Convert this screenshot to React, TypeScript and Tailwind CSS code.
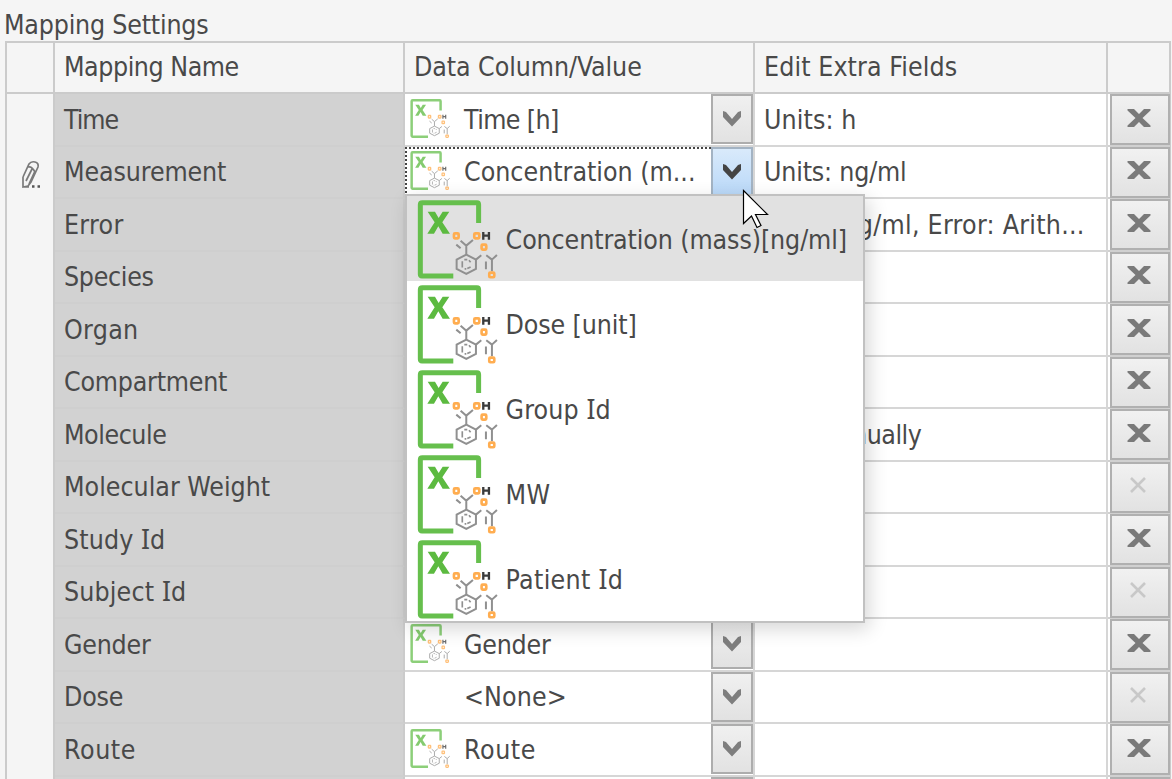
import { ReactNode } from "react";

type Row = {
  name: string;
  nameTracking?: string;
  value?: string;
  valueTracking?: string;
  icon?: boolean;
  extra?: string;
  extraTracking?: string;
  disabled?: boolean;
  active?: boolean;
};

const rows: Row[] = [
  { name: "Time", nameTracking: "tracking-[-1px]", value: "Time [h]", valueTracking: "tracking-[-0.6px]", icon: true, extra: "Units: h", extraTracking: "tracking-[0.1px]" },
  { name: "Measurement", nameTracking: "tracking-[-0.120px]", value: "Concentration (m...", valueTracking: "tracking-[0px]", icon: true, extra: "Units: ng/ml", extraTracking: "tracking-[-0.180px]", active: true },
  { name: "Error", nameTracking: "tracking-[0.3px]", extra: "Units: ng/ml, Error: Arith...", extraTracking: "tracking-[0.270px]" },
  { name: "Species", nameTracking: "tracking-[-0.3px]" },
  { name: "Organ", nameTracking: "tracking-[0.3px]" },
  { name: "Compartment", nameTracking: "tracking-[-0.230px]" },
  { name: "Molecule", nameTracking: "tracking-[-0.450px]", extra: "Edit manually", extraTracking: "tracking-[-0.5px]" },
  { name: "Molecular Weight", nameTracking: "tracking-[0px]", disabled: true },
  { name: "Study Id", nameTracking: "tracking-[0.1px]" },
  { name: "Subject Id", nameTracking: "tracking-[0.150px]", disabled: true },
  { name: "Gender", nameTracking: "tracking-[-0.230px]", value: "Gender", valueTracking: "tracking-[-0.230px]", icon: true },
  { name: "Dose", nameTracking: "tracking-[-0.2px]", value: "<None>", valueTracking: "tracking-[0.1px]", disabled: true },
  { name: "Route", nameTracking: "tracking-[0.6px]", value: "Route", valueTracking: "tracking-[0.6px]", icon: true },
  { name: "" },
];

const options = [
  { label: "Concentration (mass)[ng/ml]", tracking: "tracking-[-0.110px]" },
  { label: "Dose [unit]", tracking: "tracking-[-0.120px]" },
  { label: "Group Id", tracking: "tracking-[0.120px]" },
  { label: "MW", tracking: "tracking-[0.3px]" },
  { label: "Patient Id", tracking: "tracking-[0.3px]" },
];

function Label({ text, tracking = "" }: { text: string; tracking?: string }) {
  const parts = text.split("I");
  return (
    <span className={"whitespace-pre " + tracking}>
      {parts.map((part, i) => (
        <span key={i}>
          {i > 0 && <span className="font-['Noto_Sans',sans-serif] leading-none">I</span>}
          {part}
        </span>
      ))}
    </span>
  );
}

function DataIcon({ className }: { className: string }) {
  return (
    <svg viewBox="50 15 248 248" className={className} fill="none">
      <path d="M159 243H65Q60 243 60 238V29Q60 23 66 23H230Q235 23 235 29V84" stroke="#66bf4d" strokeWidth="15" />
      <path d="M82 50H104L115 69L127 50H147L126 82L149 116H127L114 94L101 116H81L103 82Z" fill="#5cba40" />
      <g stroke="#909090" strokeWidth="6">
        <path d="M198 179L227 194V222L198 237L169 222V194Z" />
        <path d="M198 179V152L181 137M198 152L218 135M168 149L181 160M227 194L243 181M275 229V194L258 181M275 194L290 180M257 200V223" />
        <path d="M186 199V218M192 194H201M206 196L211 202M211 216L201 221M193 222H198" strokeWidth="5" />
      </g>
      <g stroke="#ffad50" strokeWidth="8">
        <rect x="161" y="115" width="14" height="15" rx="3" />
        <rect x="222" y="115" width="15" height="15" rx="3" />
        <rect x="244" y="149" width="14" height="15" rx="3" />
        <rect x="267" y="233" width="15" height="14" rx="3" />
      </g>
      <path d="M249 111V134M266 111V134M249 122H266" stroke="#3c3c3c" strokeWidth="7" />
    </svg>
  );
}

function ArrowButton({ active }: { active?: boolean }) {
  return (
    <div
      className={
        "flex h-[50px] w-[42px] shrink-0 items-center justify-center border-2 bg-linear-to-b " +
        (active
          ? "border-[#a3b3c3] from-[#d9eafb] to-[#b9d8f8] text-[#444444]"
          : "border-[#adadad] from-[#f0f0f0] to-[#e2e2e2] text-[#7e7e7e]")
      }
    >
      <svg viewBox="0 0 18 16" className="mr-px h-4 w-[18px]" fill="currentColor">
        <path d="M0 0L3 1L9 8L15 1L18 0V6L9 15.5L0 6Z" />
      </svg>
    </div>
  );
}

function DeleteButton({ disabled }: { disabled?: boolean }) {
  return (
    <div className="flex h-[51px] w-[60px] items-center justify-center border-2 border-[#b0b0b0] bg-linear-to-b from-[#f1f1f1] to-[#e2e2e2]">
      {disabled ? (
        <svg viewBox="0 0 16 16" className="mr-1 mt-[-5px] h-4 w-4" fill="none" stroke="#c8c8c8" strokeWidth="2.6">
          <path d="M1 1L15 15M15 1L1 15" />
        </svg>
      ) : (
        <svg viewBox="0 0 24 18" className="mr-[3px] mt-[-4px] h-[18px] w-6" fill="#7a7a7a">
          <path d="M0.500 0H7L12 5L17 0H23.500V1.500L15.500 9L23.500 16.500V18H17L12 13L7 18H0.500V16.500L8.500 9L0.500 1.500Z" />
        </svg>
      )}
    </div>
  );
}

function HeaderCell({ className, children }: { className: string; children?: ReactNode }) {
  return <div className={"flex shrink-0 items-center border-r-2 border-[#cbcbcb] pb-[2px] pl-[9px] " + className}>{children}</div>;
}

function PencilIcon() {
  return (
    <svg viewBox="0 0 20 29" className="ml-[14px] mt-[3px] h-[29px] w-5" fill="none" stroke="#7a7a7a" strokeWidth="1.7">
      <path d="M2 17L8 4Q10 1 14 2Q18 3 17 7L10 22L7 26L2 27V17M7 7Q11 6 14 12M11 9L5 21M14 11L8 24M2 27H8" />
      <path d="M11 26.500H13.500M16.500 26.500H19" stroke="#555555" strokeWidth="2.4" />
    </svg>
  );
}

function OptionList() {
  return (
    <div className="absolute left-[405px] top-[194px] w-[460px] border-2 border-[#c1c1c1] bg-white shadow-[4px_6px_18px_rgba(0,0,0,0.16)]">
      {options.map((option, i) => (
        <div key={option.label} className={"flex h-[85px] items-center pl-[10px] " + (i === 0 ? "bg-[#e1e1e1]" : "bg-white")}>
          <DataIcon className="mt-[5px] h-[82.600px] w-[82.600px] shrink-0" />
          <span className="ml-[6px] mt-[2px]">
            <Label text={option.label} tracking={option.tracking} />
          </span>
        </div>
      ))}
    </div>
  );
}

export default function App() {
  return (
    <div className="relative h-[779px] w-[1172px] overflow-hidden bg-[#f5f5f5] font-['DejaVu_Sans_Condensed','DejaVu_Sans',sans-serif] text-[26.500px] leading-8 text-[#494949] [font-stretch:condensed]">
      <div className="h-[41px] pl-1 pt-[9px]">
        <Label text="Mapping Settings" tracking="tracking-[-0.2px]" />
      </div>
      <div className="ml-[5px] w-[1166px] border-2 border-b-0 border-[#cbcbcb]">
        <div className="flex h-[51px] border-b-2 border-[#cbcbcb]">
          <HeaderCell className="w-[48px]" />
          <HeaderCell className="w-[350px]">
            <Label text="Mapping Name" tracking="tracking-[-0.450px]" />
          </HeaderCell>
          <HeaderCell className="w-[350px]">
            <Label text="Data Column/Value" tracking="tracking-[-0.080px]" />
          </HeaderCell>
          <HeaderCell className="w-[353px]">
            <Label text="Edit Extra Fields" tracking="tracking-[0.1px]" />
          </HeaderCell>
        </div>
        {rows.map((row, i) => (
          <div key={i} className="flex h-[52.500px]">
            <div className="flex w-[48px] shrink-0 items-center border-r-2 border-[#cbcbcb]">{row.active && <PencilIcon />}</div>
            <div className="flex w-[350px] shrink-0 items-center border-b-2 border-r-2 border-b-[#cfcfcf] border-r-[#cbcbcb] bg-[#d2d2d2] pl-[9px] pt-px">
              <Label text={row.name} tracking={row.nameTracking} />
            </div>
            <div className="flex w-[350px] shrink-0 border-b-2 border-r-2 border-[#d6d6d6] bg-white">
              <div
                className={
                  "flex min-w-0 flex-1 items-center " +
                  (row.active ? "border-l-2 border-t-2 border-dotted border-[#444444] pb-px pl-[3px]" : "pl-[5px] pt-px")
                }
              >
                <div className="h-[42px] w-[54px] shrink-0">{row.icon && <DataIcon className="h-[41px] w-[41px] opacity-75" />}</div>
                {row.value && <Label text={row.value} tracking={row.valueTracking} />}
              </div>
              <ArrowButton active={row.active} />
            </div>
            <div className="flex w-[353px] shrink-0 items-center border-b-2 border-r-2 border-[#d6d6d6] bg-white pl-[9px] pt-px">
              {row.extra && <Label text={row.extra} tracking={row.extraTracking} />}
            </div>
            <div className="flex-1 border-b-2 border-[#d0d0d0] bg-white pl-[2px]">
              <DeleteButton disabled={row.disabled} />
            </div>
          </div>
        ))}
      </div>
      <OptionList />
      <svg viewBox="0 0 28 42" className="absolute left-[742px] top-[189px] h-[42px] w-7" fill="white" stroke="black" strokeWidth="1.2">
        <path d="M1.500 1.500V34.500L9.500 27L15 38.500L19 36.500L13.500 25.500H25.500Z" />
      </svg>
    </div>
  );
}
